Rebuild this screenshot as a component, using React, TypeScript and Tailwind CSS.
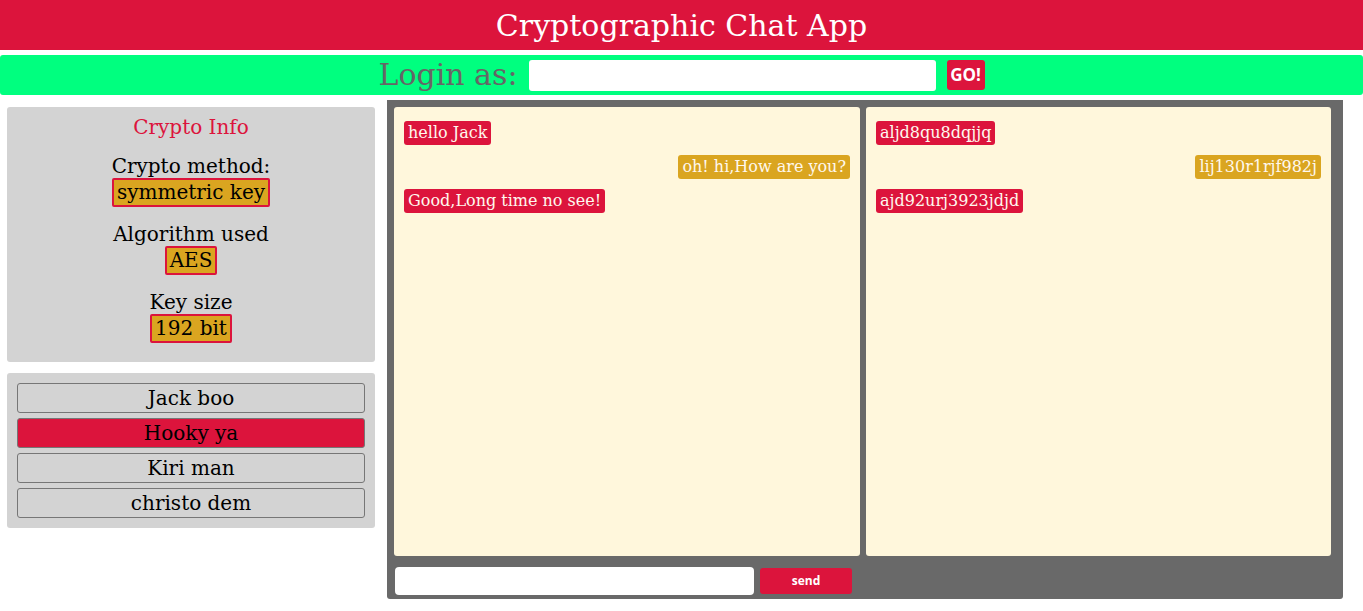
const serif = "font-['DejaVu_Serif',serif]";

const users = [
  { name: "Jack boo", active: false },
  { name: "Hooky ya", active: true },
  { name: "Kiri man", active: false },
  { name: "christo dem", active: false },
];

const plain = [
  { text: "hello Jack", mine: false },
  { text: "oh! hi,How are you?", mine: true },
  { text: "Good,Long time no see!", mine: false },
];

const cipher = [
  { text: "aljd8qu8dqjjq", mine: false },
  { text: "lij130r1rjf982j", mine: true },
  { text: "ajd92urj3923jdjd", mine: false },
];

function Badge({ children }: { children: string }) {
  return (
    <span className="inline-block rounded-[2px] border-2 border-[#dc143c] bg-[#daa520] px-[3px] text-[20px] leading-[25px] text-black">
      {children}
    </span>
  );
}

function InfoRow({ label, value }: { label: string; value: string }) {
  return (
    <div className="mt-[15px] flex flex-col items-center">
      <div className="text-[20px] leading-6 text-black">{label}</div>
      <Badge>{value}</Badge>
    </div>
  );
}

function ChatBox({ messages }: { messages: { text: string; mine: boolean }[] }) {
  return (
    <div className="flex h-[449px] flex-col gap-[10px] rounded-[3px] bg-[#fff7dc] px-[10px] pt-[14px]">
      {messages.map((m, i) => (
        <div key={i} className={`flex ${m.mine ? "justify-end" : "justify-start"}`}>
          <span
            className={`rounded-[3px] px-[4px] text-[16px] leading-6 text-[#fff8ee] ${
              m.mine ? "bg-[#daa520]" : "bg-[#dc143c]"
            }`}
          >
            {m.text}
          </span>
        </div>
      ))}
    </div>
  );
}

export default function App() {
  return (
    <div className={`h-[611px] w-[1363px] overflow-hidden bg-white ${serif}`}>
      <div className="flex h-[50px] items-center justify-center bg-[#dc143c] text-[30px] text-white">
        Cryptographic Chat App
      </div>

      <div className="mt-[5px] flex h-[40px] items-center justify-center rounded-[3px] bg-[#00ff7f]">
        <span className="text-[30px] leading-8 text-[#666666]">Login as:</span>
        <input className="ml-[11px] h-[31px] w-[407px] rounded-[3px] bg-white outline-none" />
        <button className="ml-[11px] h-[30px] w-[38px] rounded-[3px] bg-[#dc143c] font-['Open_Sans',sans-serif] text-[17px] font-bold text-white">
          GO!
        </button>
      </div>

      <div className="mt-[5px] flex">
        <div className="ml-[7px] mt-[7px] flex w-[368px] flex-col gap-[11px]">
          <div className="h-[255px] rounded-[3px] bg-[#d3d3d3] pt-[8px] text-center">
            <div className="text-[20px] leading-6 text-[#dc143c]">Crypto Info</div>
            <div className="mt-[1px]">
              <InfoRow label="Crypto method:" value="symmetric key" />
              <InfoRow label="Algorithm used" value="AES" />
              <InfoRow label="Key size" value="192 bit" />
            </div>
          </div>

          <div className="flex flex-col gap-[5px] rounded-[3px] bg-[#d3d3d3] p-[10px]">
            {users.map((u) => (
              <button
                key={u.name}
                className={`h-[30px] rounded-[3px] border border-[#767676] text-[20px] leading-6 text-black ${
                  u.active ? "bg-[#dc143c]" : "bg-[#d3d3d3]"
                }`}
              >
                {u.name}
              </button>
            ))}
          </div>
        </div>

        <div className="ml-[12px] h-[499px] w-[956px] rounded-b-[3px] bg-[#696969] pl-[7px] pr-[12px] pt-[7px]">
          <div className="grid grid-cols-[466px_465px] gap-[6px]">
            <ChatBox messages={plain} />
            <ChatBox messages={cipher} />
          </div>
          <div className="mt-[11px] flex items-center">
            <input className="ml-[1px] h-[28px] w-[359px] rounded-[4px] bg-white outline-none" />
            <button className="ml-[6px] h-[26px] w-[92px] rounded-[3px] bg-[#dc143c] font-['Open_Sans',sans-serif] text-[12px] font-bold text-white">
              send
            </button>
          </div>
        </div>
      </div>
    </div>
  );
}
